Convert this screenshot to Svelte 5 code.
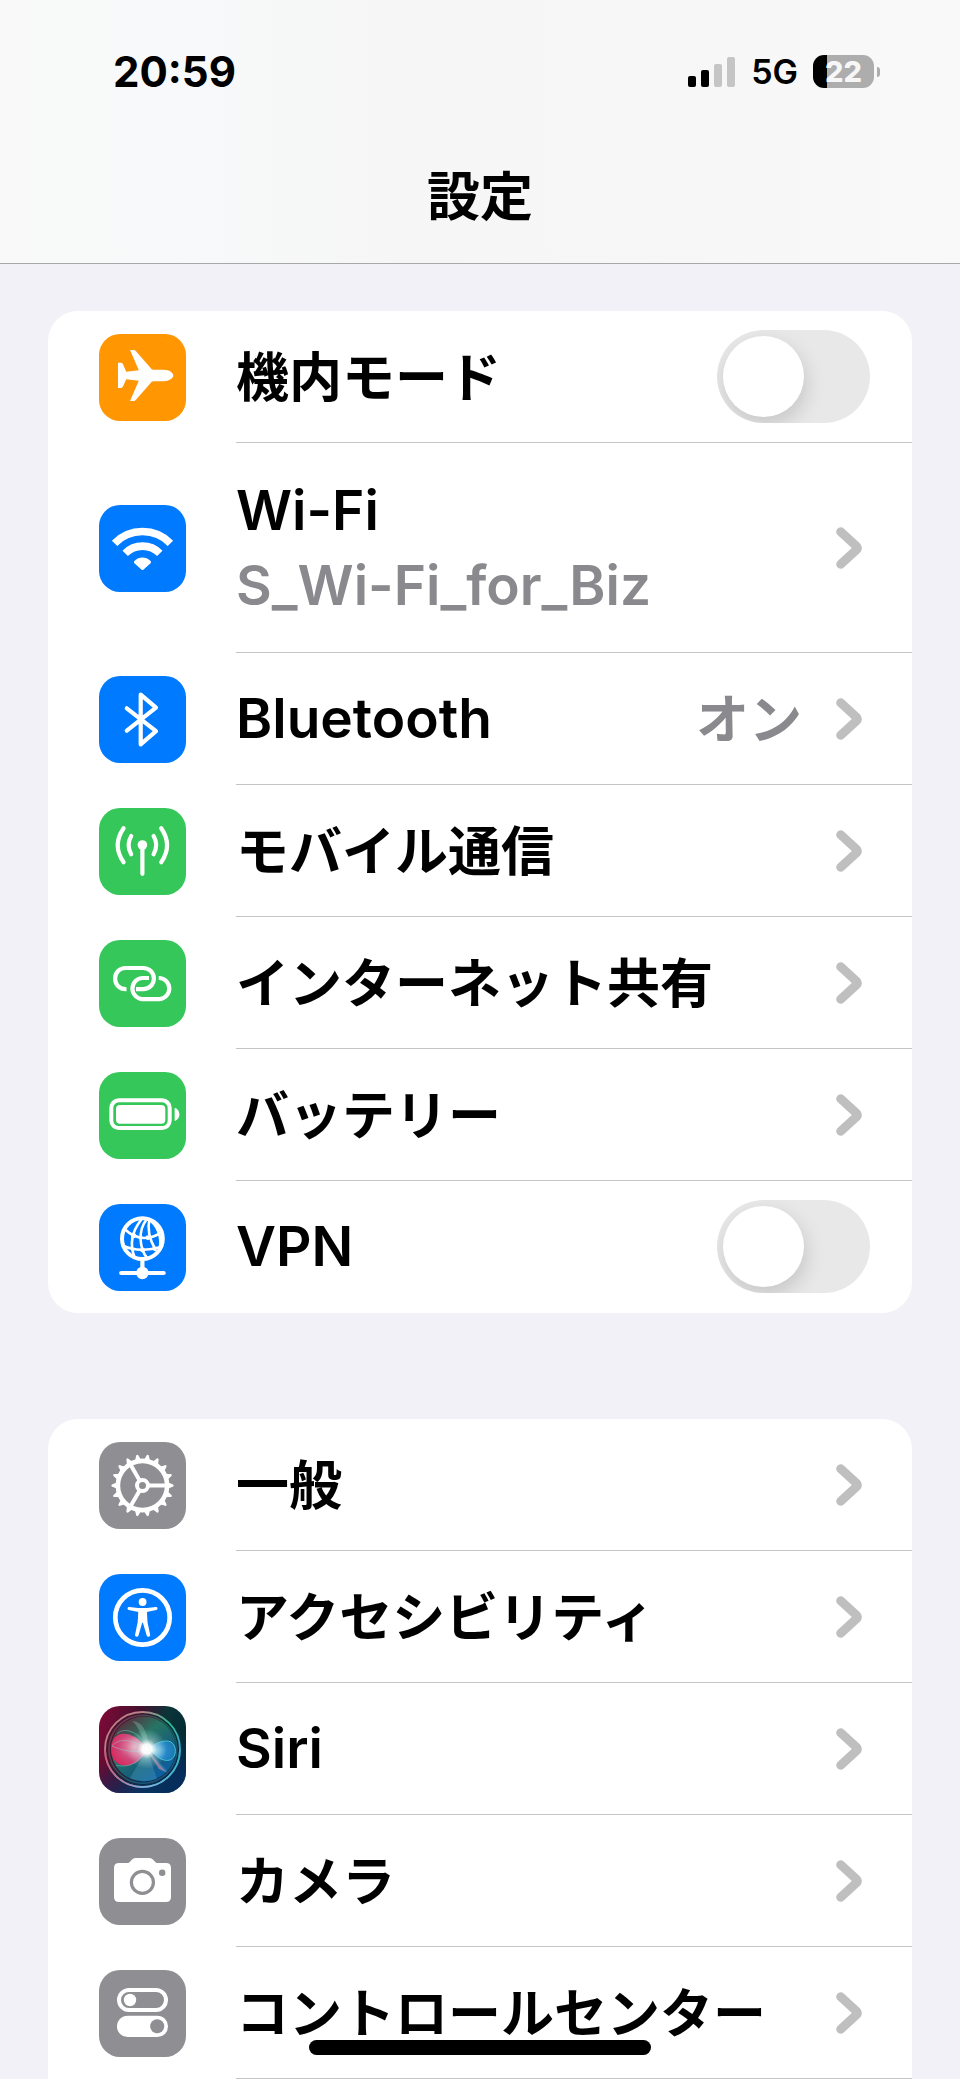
<script>
  let airplane = $state(false);
  let vpn = $state(false);

  const teeth = Array.from({ length: 18 }, (_, i) => i * 20);

  const network = [
    { id: 'airplane', label: '機内モード', color: 'orange', toggle: true },
    { id: 'wifi', label: 'Wi-Fi', color: 'blue', detail: 'S_Wi-Fi_for_Biz', latin: true },
    { id: 'bluetooth', label: 'Bluetooth', color: 'blue', value: 'オン', latin: true },
    { id: 'cellular', label: 'モバイル通信', color: 'green' },
    { id: 'hotspot', label: 'インターネット共有', color: 'green' },
    { id: 'battery', label: 'バッテリー', color: 'green' },
    { id: 'vpn', label: 'VPN', color: 'blue', toggle: true, latin: true }
  ];

  const general = [
    { id: 'general', label: '一般', color: 'gray' },
    { id: 'accessibility', label: 'アクセシビリティ', color: 'blue' },
    { id: 'siri', label: 'Siri', color: 'dark', latin: true },
    { id: 'camera', label: 'カメラ', color: 'gray' },
    { id: 'control', label: 'コントロールセンター', color: 'gray' }
  ];
</script>

{#snippet glyph(id)}
  <svg viewBox="0 0 87 87" aria-hidden="true">
    {#if id === 'airplane'}
      <path class="fill" d="M31 16h3.500q1.500 0 2.500 1.200L52.500 35q.7.800 1.800.8H65c5 0 9.300 3 9.300 5.700S70 47.200 65 47.200H54.300q-1.100 0-1.800.8L37 65.800q-1 1.200-2.500 1.200H31l8.800-20.300L27.200 45.200 24 52.600Q23.300 54 21.800 54H19V28.800h2.800q1.500 0 2.200 1.400l3.200 7.600 12.600-1.500z" />
    {:else if id === 'wifi'}
      <g class="line" stroke-width="7.600" stroke-linecap="butt">
        <path d="M15.600 38.300a39 39 0 0 1 55.800 0" />
        <path d="M26.200 48.400a24.300 24.300 0 0 1 34.600 0" />
      </g>
      <path class="fill" d="M35.400 56q-1.100 1.100 0 2.200l7 6.200q1.100 1 2.200 0l7-6.200q1.100-1.100 0-2.200c-4.600-4.600-11.600-4.600-16.200 0z" />
    {:else if id === 'bluetooth'}
      <path class="line" stroke-width="4.200" d="M27.800 32.300 57 55.200 41.700 68.300V18.600L57 31.700 27.800 54.700" />
    {:else if id === 'cellular'}
      <circle class="fill" cx="43.400" cy="37" r="4.800" />
      <g class="line" stroke-width="4.200">
        <path d="M43.400 38v27.800" />
        <path d="M32.200 28q-5.200 9 0 18.200M54.600 28q5.200 9 0 18.200" />
        <path d="M24.600 20.200q-11.800 17 0 34M62.200 20.200q11.800 17 0 34" />
      </g>
    {:else if id === 'hotspot'}
      <g class="line" stroke-width="4.200" stroke-linecap="butt">
        <path d="M27.500 49.200C20.500 49.600 16.100 44.500 16.100 38.600S20.500 28 26.600 28h17.700a10.600 10.600 0 0 1 0 21.200H37" />
        <path d="M50 38h-7a10.600 10.600 0 0 0 0 21.100h17.700a10.600 10.600 0 0 0 0-21.100h-1" />
      </g>
    {:else if id === 'battery'}
      <rect class="line" stroke-width="4" x="12.300" y="28.300" width="58.400" height="27.800" rx="7.500" />
      <rect class="fill" x="17" y="33" width="49.300" height="18.700" rx="4" />
      <path class="fill" d="M75.600 35.800c3 1 4.800 3.600 4.800 6.600s-1.800 5.600-4.800 6.600z" />
    {:else if id === 'vpn'}
      <g class="line" stroke-width="2.600">
        <path d="M42 16Q28 34 35.500 53M48 15C38 27 41 45 48 54M50.500 15C47.500 27 52 38 56.500 46M52 17C60 24 63 36 60.500 45" />
        <path d="M25.500 25Q37 36 50 33.500 57 32.500 63 27.500M23.500 41.500Q40 49.500 63 42.500" />
      </g>
      <circle class="line" stroke-width="4" cx="43.400" cy="34.700" r="20.400" />
      <path class="line" stroke-width="4.200" d="M43.400 57v12M22.200 69h42.500" />
      <circle class="fill" cx="43.400" cy="69" r="6.200" />
      <g class="fill">
        <circle cx="34.500" cy="31.500" r="2.600" />
        <circle cx="49" cy="33.700" r="2.400" />
        <circle cx="43.500" cy="46" r="2.400" />
        <circle cx="55.500" cy="44.500" r="2.200" />
      </g>
    {:else if id === 'general'}
      {#each teeth as angle (angle)}
        <path class="fill" transform="rotate({angle} 43.500 43.500)" d="M67.500 39.800 73 42q1.700.500 1.700 1.500T73 45l-5.500 2.200z" />
      {/each}
      <circle class="line" stroke-width="4.600" cx="43.500" cy="43.500" r="24.600" />
      <g class="line" stroke-width="4">
        <circle cx="43.500" cy="43.500" r="5.500" />
        <path d="M49.500 43.500H67M40.500 38.300 31.700 23M40.500 48.700 31.700 64" />
      </g>
    {:else if id === 'accessibility'}
      <circle class="line" stroke-width="4.700" cx="43.500" cy="43.500" r="27.200" />
      <circle class="fill" cx="43.600" cy="28" r="3.900" />
      <path class="fill" d="M30.300 32.900 39 34.100h9l8.800-1.200c2-.2 2.400 2.500.6 3l-8.600 1.800c-.8.200-.9.600-.8 1.400l.5 8.900 2.600 12.500c.5 2.400-2.700 3.100-3.400.9L43.900 48.800h-.7l-3.700 12.600c-.7 2.200-3.900 1.500-3.400-.9L38.700 48l.5-8.900c.1-.8 0-1.200-.8-1.400l-8.700-1.800c-1.800-.5-1.400-3.200.6-3z" />
    {:else if id === 'camera'}
      <path class="fill" d="M20 25h8.500q1.500 0 2.500-1.200l1.800-2Q34.300 20 36.500 20h14q2.200 0 3.700 1.800l1.800 2Q57 25 58.500 25H67q5 0 5 5v29q0 5-5 5H20q-5 0-5-5V30q0-5 5-5z" />
      <circle class="cut" stroke-width="3.200" cx="43.400" cy="44.400" r="11" />
      <circle class="hole" cx="63.200" cy="34.800" r="3.200" />
    {:else if id === 'control'}
      <rect class="line" stroke-width="4" x="20" y="20" width="47" height="20" rx="10" />
      <circle class="fill" cx="31" cy="30" r="6.200" />
      <rect class="fill" x="18" y="45.700" width="51" height="21.300" rx="10.600" />
      <circle class="hole" cx="58.200" cy="56.300" r="7" />
    {:else if id === 'siri'}
      <defs>
        <linearGradient id="siri-back" x1="0" y1=".35" x2="1" y2=".65">
          <stop offset="0" stop-color="#780a36" />
          <stop offset=".35" stop-color="#43112f" />
          <stop offset=".65" stop-color="#0a3538" />
          <stop offset="1" stop-color="#032733" />
        </linearGradient>
        <linearGradient id="siri-low" x1="0" y1="0" x2=".4" y2="1">
          <stop offset=".6" stop-color="#08306c" stop-opacity="0" />
          <stop offset="1" stop-color="#08306c" stop-opacity=".7" />
        </linearGradient>
        <linearGradient id="siri-rim" x1="0" y1="0" x2="1" y2="1">
          <stop offset="0" stop-color="#c5767f" />
          <stop offset=".25" stop-color="#b98088" />
          <stop offset=".5" stop-color="#2fbd92" />
          <stop offset=".75" stop-color="#35a9d8" />
          <stop offset="1" stop-color="#588fd2" />
        </linearGradient>
        <linearGradient id="siri-rim-low" x1="0" y1="0" x2="1" y2="0">
          <stop offset="0" stop-color="#da5277" />
          <stop offset=".55" stop-color="#8faee0" />
          <stop offset="1" stop-color="#2fb6c4" />
        </linearGradient>
        <linearGradient id="siri-orb" x1=".1" y1=".1" x2=".8" y2="1">
          <stop offset="0" stop-color="#5a2b3a" />
          <stop offset=".35" stop-color="#277564" />
          <stop offset=".65" stop-color="#175f78" />
          <stop offset="1" stop-color="#0b5fae" />
        </linearGradient>
        <radialGradient id="siri-pink" cx=".65" cy=".4" r=".7">
          <stop offset="0" stop-color="#f4a3bd" />
          <stop offset=".6" stop-color="#d8457a" />
          <stop offset="1" stop-color="#e5245d" />
        </radialGradient>
        <radialGradient id="siri-blue" cx=".2" cy=".5" r=".9">
          <stop offset="0" stop-color="#96dcf5" />
          <stop offset=".5" stop-color="#2b90d8" />
          <stop offset="1" stop-color="#1678a8" />
        </radialGradient>
        <radialGradient id="siri-glow">
          <stop offset="0" stop-color="#fff" />
          <stop offset=".25" stop-color="#fff" stop-opacity=".95" />
          <stop offset=".5" stop-color="#d9f5f5" stop-opacity=".4" />
          <stop offset="1" stop-color="#bfeeee" stop-opacity="0" />
        </radialGradient>
      </defs>
      <rect width="87" height="87" fill="url(#siri-back)" />
      <rect width="87" height="87" fill="url(#siri-low)" />
      <circle cx="43.500" cy="43.500" r="37" fill="#10282f" fill-opacity=".3" />
      <circle cx="44.500" cy="43" r="32.500" fill="url(#siri-orb)" />
      <path d="M48 43 66 62q5 5-1 4zM48 43 31 72q12 6 27 1z" fill="#7bd0e8" fill-opacity=".2" />
      <path d="M48 43C42 28 38 18 33 15q14 0 17 26z" fill="#b9eedd" fill-opacity=".25" />
      <path d="M48 43C40 31 30 27 22 28 12 30 10 43 14 52c5 10 17 9 25 3 5-4 8-8 9-12z" fill="url(#siri-pink)" fill-opacity=".95" />
      <path d="M48 43c-7 12-17 20-31 16M48 43C36 34 20 31 13 40M48 43C35 48 22 44 13 40M48 43C42 26 25 20 18 28" fill="none" stroke="#86dfdc" stroke-opacity=".45" />
      <path d="M50 42C57 37 66 33 72 36c6 4 6 15-1 18-7 2-14-3-21-12z" fill="url(#siri-blue)" fill-opacity=".85" stroke="#41bfdc" stroke-width="1" />
      <path d="m48 44 19 22-7-3z" fill="#d78fae" fill-opacity=".6" />
      <circle cx="48" cy="43" r="20" fill="url(#siri-glow)" />
      <circle cx="43.500" cy="43.500" r="37.500" fill="none" stroke="url(#siri-rim)" stroke-width="1.800" />
      <path d="M6 43.500a37.500 37.500 0 0 0 75 0" fill="none" stroke="url(#siri-rim-low)" stroke-width="1.600" />
      <circle cx="44" cy="43.200" r="34" fill="none" stroke="url(#siri-rim)" stroke-opacity=".35" stroke-width="1.500" />
    {/if}
  </svg>
{/snippet}

{#snippet face(item)}
  <span class="icon {item.color}">{@render glyph(item.id)}</span>
{/snippet}

{#snippet row(item)}
  <li>
    {#if item.toggle}
      <label class="row">
        {@render face(item)}
        <span class="body">
          <span class="label" class:latin={item.latin}>{item.label}</span>
          {#if item.id === 'vpn'}
            <input type="checkbox" role="switch" bind:checked={vpn} />
          {:else}
            <input type="checkbox" role="switch" bind:checked={airplane} />
          {/if}
        </span>
      </label>
    {:else}
      <button type="button" class="row" class:tall={item.detail}>
        {@render face(item)}
        <span class="body">
          <span class="label" class:latin={item.latin}>
            {item.label}
            {#if item.detail}<span class="detail">{item.detail}</span>{/if}
          </span>
          {#if item.value}<span class="value">{item.value}</span>{/if}
          <svg class="chevron" viewBox="0 0 26 42" aria-hidden="true">
            <path d="M4.700 4.800 20.500 19.300q1.800 1.700 0 3.400L4.700 37.200" />
          </svg>
        </span>
      </button>
    {/if}
  </li>
{/snippet}

<div class="screen">
  <header>
    <div class="status">
      <time>20:59</time>
      <div class="indicators">
        <svg class="signal" viewBox="0 0 48 31" aria-hidden="true">
          <rect x="0" y="20" width="8" height="11" rx="2" />
          <rect x="13" y="14" width="8" height="17" rx="2" />
          <rect class="off" x="26" y="8" width="8" height="23" rx="2" />
          <rect class="off" x="39" y="1" width="8" height="30" rx="2" />
        </svg>
        <span class="carrier">5G</span>
        <span class="power"><span class="cell">22</span><span class="nub"></span></span>
      </div>
    </div>
    <h1>設定</h1>
  </header>

  <main>
    <ul>
      {#each network as item (item.id)}{@render row(item)}{/each}
    </ul>
    <ul class="last">
      {#each general as item (item.id)}{@render row(item)}{/each}
    </ul>
  </main>

  <div class="home"></div>
</div>

<style>
  :global(body) {
    background: #f2f1f7;
  }

  .screen {
    font-family: Inter, 'Noto Sans CJK JP', sans-serif;
    color: #000;
  }

  header {
    box-sizing: border-box;
    height: 264px;
    border-bottom: 1px solid #a8a8aa;
    background: linear-gradient(90deg, #f9f9f9, #f8f9fa 18%, #f6f6f6 42%, #f7f7f7 75%, #f9f9f9);
  }

  .status {
    display: flex;
    align-items: center;
    justify-content: space-between;
    height: 143px;
    padding: 0 80px 0 113px;
  }

  time {
    font-size: 42px;
    font-weight: 700;
  }

  .indicators {
    display: flex;
    align-items: center;
  }

  .signal {
    width: 48px;
    height: 31px;
  }

  .signal .off {
    fill: #c5c5c5;
  }

  .carrier {
    margin: 0 15px;
    font-size: 34px;
    font-weight: 600;
  }

  .power {
    display: flex;
    align-items: center;
    gap: 3px;
  }

  .cell {
    width: 61px;
    border-radius: 11px;
    background: linear-gradient(90deg, #000 14px, #adadad 14px);
    color: #f7f7f7;
    font-size: 29px;
    font-weight: 800;
    line-height: 33px;
    text-align: center;
  }

  .nub {
    width: 3px;
    height: 10px;
    border-radius: 0 4px 4px 0;
    background: #adadad;
  }

  h1 {
    margin: 0;
    font-size: 53px;
    font-weight: 700;
    line-height: 108px;
    text-align: center;
  }

  main {
    padding: 47px 48px 0;
  }

  ul {
    margin: 0 0 106px;
    padding: 0;
    list-style: none;
    border-radius: 30px;
    background: #fff;
    overflow: hidden;
  }

  ul.last {
    margin: 0;
    border-radius: 30px 30px 0 0;
  }

  .row {
    display: flex;
    width: 100%;
    height: 132px;
    padding: 0 0 0 51px;
    gap: 50px;
    align-items: center;
    border: 0;
    background: none;
    color: inherit;
    font: inherit;
    text-align: left;
    box-sizing: border-box;
  }

  .tall {
    height: 210px;
  }

  .icon {
    flex: none;
    width: 87px;
    height: 87px;
    border-radius: 21px;
    overflow: hidden;
  }

  .icon svg {
    display: block;
    width: 100%;
    height: 100%;
  }

  .orange {
    background: #ff9602;
  }

  .blue {
    background: #007aff;
  }

  .green {
    background: #35c759;
  }

  .gray {
    background: #8e8e93;
  }

  .fill {
    fill: #fff;
  }

  .line {
    fill: none;
    stroke: #fff;
    stroke-linecap: round;
    stroke-linejoin: round;
  }

  .line[stroke-linecap='butt'] {
    stroke-linecap: butt;
  }

  .cut {
    fill: none;
    stroke: #8e8e93;
  }

  .hole {
    fill: #8e8e93;
  }

  .body {
    display: flex;
    flex: 1;
    align-self: stretch;
    align-items: center;
    box-sizing: border-box;
    padding-right: 42px;
    border-bottom: 1px solid #c5c5c7;
  }

  ul:not(.last) li:last-child .body {
    border-bottom-color: transparent;
  }

  .label,
  .value {
    padding-top: 4px;
    font-size: 53px;
    font-weight: 600;
    line-height: 75px;
    white-space: nowrap;
  }

  .label {
    flex: 1;
  }

  .latin {
    padding-top: 0;
    font-size: 55px;
  }

  .detail {
    display: block;
    color: #8a8a8e;
  }

  .value {
    margin-right: 34px;
    color: #8a8a8e;
  }

  .chevron {
    flex: none;
    width: 26px;
    height: 42px;
    margin-right: 8px;
  }

  .chevron path {
    fill: none;
    stroke: #bfbfbf;
    stroke-width: 9;
    stroke-linecap: round;
    stroke-linejoin: round;
  }

  input {
    appearance: none;
    flex: none;
    width: 153px;
    height: 93px;
    margin: 0;
    padding: 6px;
    box-sizing: border-box;
    border-radius: 47px;
    background: #e8e8e8;
    overflow: hidden;
  }

  input::before {
    content: '';
    display: block;
    width: 81px;
    height: 81px;
    border-radius: 50%;
    background: #fff;
    box-shadow: 2px 8px 20px rgb(0 0 0 / 15%);
  }

  input:checked {
    background: #35c759;
  }

  input:checked::before {
    margin-left: auto;
  }

  .home {
    position: fixed;
    bottom: 24px;
    left: 50%;
    width: 342px;
    height: 15px;
    border-radius: 8px;
    background: #000;
    transform: translateX(-50%);
  }
</style>
